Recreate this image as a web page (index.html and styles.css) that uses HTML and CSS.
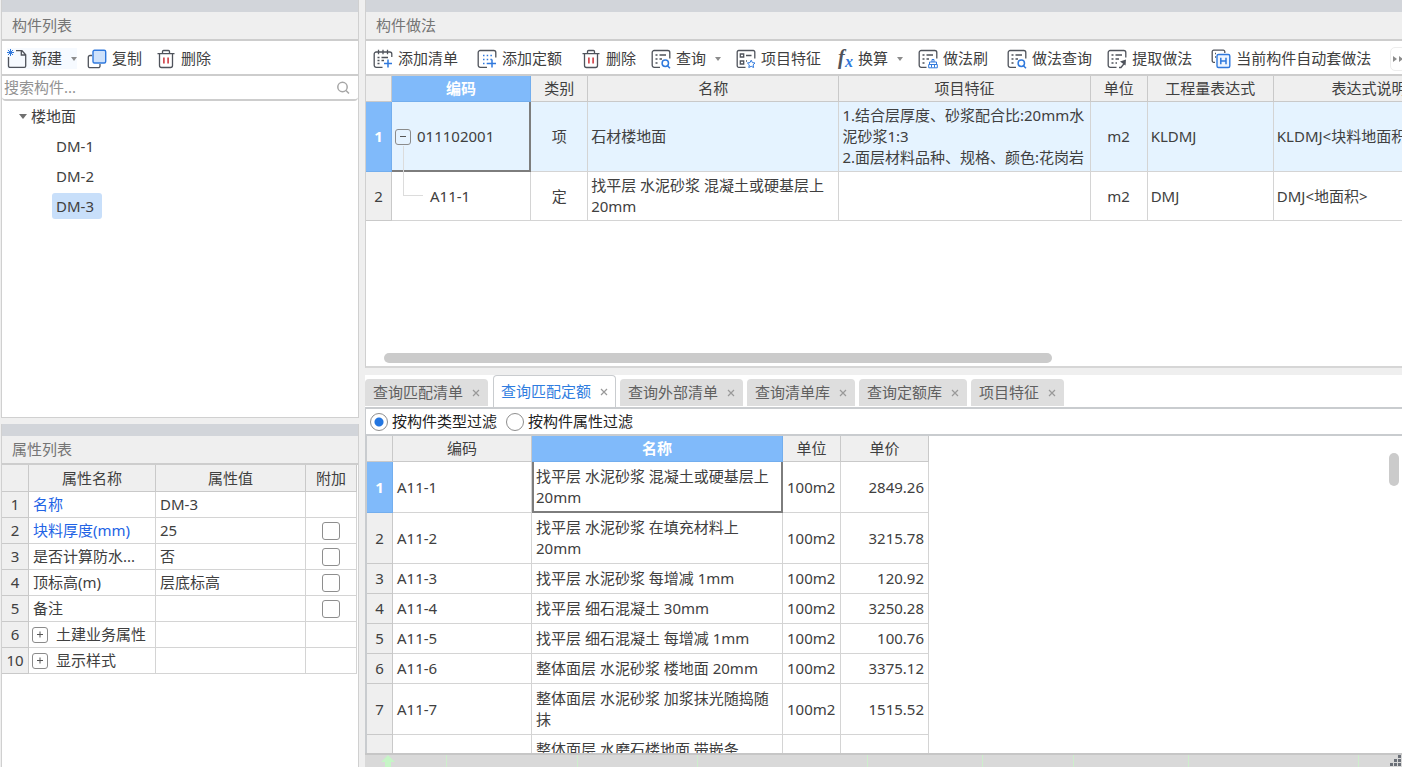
FILE: index.html
```html
<!DOCTYPE html>
<html lang="zh-CN">
<head>
<meta charset="utf-8">
<title>构件做法</title>
<link rel="stylesheet" href="styles.css">
</head>
<body>
<div class="app">
  <aside class="sidebar">
    <section class="panel components">
      <div class="grip"></div>
      <h2 class="panel-title">构件列表</h2>
      <div class="toolbar side-tools">
        <button class="tool split" type="button">
          <svg class="icon" viewBox="0 0 20 20"><path class="ink" d="M9 1.700h6l3.700 4V17a1.400 1.400 0 0 1-1.400 1.400H2.900A1.400 1.400 0 0 1 1.500 17V8M14.300 2v4h4"/><path class="blue thin" d="M0 3.500h7M3.500 0v7M1 1l5 5M6 1L1 6"/></svg>
          <span>新建</span><i class="caret"></i>
        </button>
        <button class="tool gap-after" type="button">
          <svg class="icon" viewBox="0 0 20 20"><path class="ink" d="M5 6.500H3A1.700 1.700 0 0 0 1.300 8.200V17A1.700 1.700 0 0 0 3 18.700h8.300A1.700 1.700 0 0 0 13 17v-2"/><rect x="6" y="1.300" width="12.700" height="12.700" rx="1.500" fill="#cfe2fb" stroke="#3079dd" stroke-width="1.400"/></svg>
          <span>复制</span>
        </button>
        <button class="tool" type="button">
          <svg class="icon" viewBox="0 0 20 20"><path class="ink" d="M1.500 4.600h17M6.500 4.300V2.600q0-1.100 1.100-1.100h4.800q1.100 0 1.100 1.100v1.700M3.500 4.800V16.500a2 2 0 0 0 2 2h9a2 2 0 0 0 2-2V4.800"/><path class="red" d="M7.900 8.500v6M12.100 8.500v6"/></svg>
          <span>删除</span>
        </button>
      </div>
      <label class="search">
        <input type="search" placeholder="搜索构件..." aria-label="搜索构件">
        <svg viewBox="0 0 14 14"><circle cx="6.500" cy="6" r="4.700"/><path d="M10 9.500l3 3"/></svg>
      </label>
      <div class="tree">
        <div class="tree-root"><i class="caret dark"></i>楼地面</div>
        <ul>
          <li><button type="button">DM-1</button></li>
          <li><button type="button">DM-2</button></li>
          <li><button type="button" class="on">DM-3</button></li>
        </ul>
      </div>
    </section>

    <section class="panel properties">
      <div class="grip"></div>
      <h2 class="panel-title">属性列表</h2>
      <table class="grid props">
        <colgroup><col class="p-no"><col class="p-name"><col><col class="p-add"></colgroup>
        <thead><tr><th></th><th>属性名称</th><th>属性值</th><th>附加</th></tr></thead>
        <tbody>
          <tr><th>1</th><td class="link">名称</td><td>DM-3</td><td></td></tr>
          <tr><th>2</th><td class="link">块料厚度(mm)</td><td>25</td><td class="mid"><input type="checkbox" aria-label="块料厚度附加"></td></tr>
          <tr><th>3</th><td>是否计算防水...</td><td>否</td><td class="mid"><input type="checkbox" aria-label="是否计算防水附加"></td></tr>
          <tr><th>4</th><td>顶标高(m)</td><td>层底标高</td><td class="mid"><input type="checkbox" aria-label="顶标高附加"></td></tr>
          <tr><th>5</th><td>备注</td><td></td><td class="mid"><input type="checkbox" aria-label="备注附加"></td></tr>
          <tr><th>6</th><td><div class="group"><button class="expander plus" type="button" aria-label="展开"></button>土建业务属性</div></td><td></td><td></td></tr>
          <tr><th>10</th><td><div class="group"><button class="expander plus" type="button" aria-label="展开"></button>显示样式</div></td><td></td><td></td></tr>
        </tbody>
      </table>
    </section>
  </aside>

  <main class="main">
    <section class="panel methods">
      <div class="grip"></div>
      <h2 class="panel-title">构件做法</h2>
      <div class="toolbar main-tools">
        <button class="tool gap-after" type="button">
          <svg class="icon" viewBox="0 0 20 20"><path class="ink" d="M9.500 18.300H3.200a2 2 0 0 1-2-2V5a2 2 0 0 1 2-2h13.600a2 2 0 0 1 2 2v3M5.500.800v4.400M10 .800v4.400M14.500.800v4.400M4.500 8.500h2M8.500 8.500h6.500M4.500 11.500h2M8.500 11.500h2.500M4.500 14.500h2"/><path class="blue" d="M15 10.500v8M11 14.500h8"/></svg>
          <span>添加清单</span>
        </button>
        <button class="tool gap-after" type="button">
          <svg class="icon" viewBox="0 0 20 20"><path class="ink" d="M10 18.300H3.200a2 2 0 0 1-2-2V3.500a2 2 0 0 1 2-2h13.600a2 2 0 0 1 2 2v5"/><path class="blue dots" d="M6 6.500h9M6 10.500h9M6 14.500h5"/><path class="blue" d="M15 10.500v8M11 14.500h8"/></svg>
          <span>添加定额</span>
        </button>
        <button class="tool" type="button">
          <svg class="icon" viewBox="0 0 20 20"><path class="ink" d="M1.500 4.600h17M6.500 4.300V2.600q0-1.100 1.100-1.100h4.800q1.100 0 1.100 1.100v1.700M3.500 4.800V16.500a2 2 0 0 0 2 2h9a2 2 0 0 0 2-2V4.800"/><path class="red" d="M7.900 8.500v6M12.100 8.500v6"/></svg>
          <span>删除</span>
        </button>
        <button class="tool" type="button">
          <svg class="icon" viewBox="0 0 20 20"><path class="ink" d="M9 18.300H3.200a2 2 0 0 1-2-2V3.500a2 2 0 0 1 2-2h13.600a2 2 0 0 1 2 2v6M4.500 6h2M8.500 6h6.500M4.500 10h2M8.500 10h2.500M4.500 14h2"/><circle class="blue" cx="14.300" cy="14.300" r="3.200"/><path class="blue" d="M16.500 16.700l2.500 2.500"/></svg>
          <span>查询</span><i class="caret"></i>
        </button>
        <button class="tool" type="button">
          <svg class="icon" viewBox="0 0 20 20"><path class="ink" d="M9.500 18.300H2.700a1.500 1.500 0 0 1-1.500-1.500V3a1.500 1.500 0 0 1 1.500-1.500h14.600a1.500 1.500 0 0 1 1.500 1.500v6.500M4.300 5h3.400v3H4.300zM10 6.500h5.500M4.300 12h3.400v3H4.300zM10 12h1"/><path class="blue thin" d="M15.200 11.200l1.200 2.400 2.600.400-1.900 1.900.500 2.600-2.400-1.200-2.400 1.200.500-2.600-1.900-1.900 2.600-.400z"/></svg>
          <span>项目特征</span>
        </button>
        <button class="tool" type="button">
          <svg class="icon fx" viewBox="0 0 17 20"><text class="fx-f" x="2" y="15">f</text><text class="fx-x" x="9" y="18">x</text></svg>
          <span>换算</span><i class="caret"></i>
        </button>
        <button class="tool gap-after" type="button">
          <svg class="icon" viewBox="0 0 20 20"><path class="ink" d="M8.500 18.300H3.200a2 2 0 0 1-2-2V3.500a2 2 0 0 1 2-2h13.600a2 2 0 0 1 2 2v6M4.500 6h2M8.500 6h6.500M4.500 10h2M8.500 10h2.500M4.500 14h2"/><path class="blue thin" d="M14 13v-2.500h2V13M11.500 15.500V13h7v2.500M10.700 15.500h8.600v3.300h-8.600zM13.500 16v2.500M16.500 16v2.500"/></svg>
          <span>做法刷</span>
        </button>
        <button class="tool" type="button">
          <svg class="icon" viewBox="0 0 20 20"><path class="ink" d="M9 18.300H3.200a2 2 0 0 1-2-2V3.500a2 2 0 0 1 2-2h13.600a2 2 0 0 1 2 2v6M4.500 6h2M8.500 6h6.500M4.500 10h2M8.500 10h2.500M4.500 14h2"/><circle class="blue" cx="14.300" cy="14.300" r="3.200"/><path class="blue" d="M16.500 16.700l2.500 2.500"/></svg>
          <span>做法查询</span>
        </button>
        <button class="tool gap-after" type="button">
          <svg class="icon" viewBox="0 0 20 20"><path class="ink" d="M9.500 18.300H3.200a2 2 0 0 1-2-2V3.500a2 2 0 0 1 2-2h13.600a2 2 0 0 1 2 2v5M4.500 6h2M8.500 6h6.500M4.500 10h2M8.500 10h3.500M4.500 14h2M8.500 14h1.500M12 18.500h2l4-5"/><path d="M13 12.500l6-2-.500 6z" fill="#4f535b"/></svg>
          <span>提取做法</span>
        </button>
        <button class="tool gap-after" type="button">
          <svg class="icon" viewBox="0 0 20 20"><path class="ink" d="M4 13.300H2.700a1.500 1.500 0 0 1-1.500-1.500V2.700a1.500 1.500 0 0 1 1.500-1.500h9.600a1.500 1.500 0 0 1 1.500 1.500V4M4 4.500h1M4 8h1"/><rect x="6" y="5.500" width="12.800" height="13" rx="1.500" fill="#eef5ff" stroke="#3079dd" stroke-width="1.400"/><path class="blue" d="M9.800 8.800v6.500M15 8.800v6.500M9.800 12H15"/></svg>
          <span>当前构件自动套做法</span>
        </button>
        <button class="more" type="button" aria-label="更多"><i></i><i></i></button>
      </div>
      <div class="table-scroll">
        <table class="grid bill">
          <colgroup><col class="c-no"><col class="c-code"><col class="c-type"><col class="c-text"><col class="c-text"><col class="c-unit"><col class="c-expr"><col class="c-desc"></colgroup>
          <thead><tr><th></th><th class="on">编码</th><th>类别</th><th>名称</th><th>项目特征</th><th>单位</th><th>工程量表达式</th><th>表达式说明</th></tr></thead>
          <tbody>
            <tr class="picked"><th class="on">1</th><td class="focus"><div class="group parent"><button class="expander minus" type="button" aria-label="折叠"></button>011102001</div></td><td class="mid">项</td><td>石材楼地面</td><td>1.结合层厚度、砂浆配合比:20mm水泥砂浆1:3<br>2.面层材料品种、规格、颜色:花岗岩</td><td class="mid">m2</td><td>KLDMJ</td><td>KLDMJ&lt;块料地面积&gt;</td></tr>
            <tr><th>2</th><td class="child"><i></i>A11-1</td><td class="mid">定</td><td>找平层 水泥砂浆 混凝土或硬基层上 20mm</td><td></td><td class="mid">m2</td><td>DMJ</td><td>DMJ&lt;地面积&gt;</td></tr>
          </tbody>
        </table>
      </div>
      <div class="h-scroll"><i></i></div>
    </section>

    <section class="query">
      <div class="tabs" role="tablist">
        <button class="tab" role="tab" type="button">查询匹配清单<svg viewBox="0 0 8 8"><path d="M1 1l6 6M7 1L1 7"/></svg></button>
        <button class="tab active" role="tab" type="button" aria-selected="true">查询匹配定额<svg viewBox="0 0 8 8"><path d="M1 1l6 6M7 1L1 7"/></svg></button>
        <button class="tab" role="tab" type="button">查询外部清单<svg viewBox="0 0 8 8"><path d="M1 1l6 6M7 1L1 7"/></svg></button>
        <button class="tab" role="tab" type="button">查询清单库<svg viewBox="0 0 8 8"><path d="M1 1l6 6M7 1L1 7"/></svg></button>
        <button class="tab" role="tab" type="button">查询定额库<svg viewBox="0 0 8 8"><path d="M1 1l6 6M7 1L1 7"/></svg></button>
        <button class="tab" role="tab" type="button">项目特征<svg viewBox="0 0 8 8"><path d="M1 1l6 6M7 1L1 7"/></svg></button>
      </div>
      <div class="filters">
        <label><input type="radio" name="filter" checked>按构件类型过滤</label>
        <label><input type="radio" name="filter">按构件属性过滤</label>
      </div>
      <div class="results">
        <table class="grid quota">
          <colgroup><col class="c-no"><col class="c-code"><col class="c-text"><col class="q-unit"><col class="q-price"></colgroup>
          <thead><tr><th></th><th>编码</th><th class="on">名称</th><th>单位</th><th>单价</th></tr></thead>
          <tbody>
            <tr><th class="on">1</th><td>A11-1</td><td class="focus">找平层 水泥砂浆 混凝土或硬基层上 20mm</td><td>100m2</td><td class="num">2849.26</td></tr>
            <tr><th>2</th><td>A11-2</td><td>找平层 水泥砂浆 在填充材料上<br>20mm</td><td>100m2</td><td class="num">3215.78</td></tr>
            <tr><th>3</th><td>A11-3</td><td>找平层 水泥砂浆 每增减 1mm</td><td>100m2</td><td class="num">120.92</td></tr>
            <tr><th>4</th><td>A11-4</td><td>找平层 细石混凝土 30mm</td><td>100m2</td><td class="num">3250.28</td></tr>
            <tr><th>5</th><td>A11-5</td><td>找平层 细石混凝土 每增减 1mm</td><td>100m2</td><td class="num">100.76</td></tr>
            <tr><th>6</th><td>A11-6</td><td>整体面层 水泥砂浆 楼地面 20mm</td><td>100m2</td><td class="num">3375.12</td></tr>
            <tr><th>7</th><td>A11-7</td><td>整体面层 水泥砂浆 加浆抹光随捣随抹</td><td>100m2</td><td class="num">1515.52</td></tr>
            <tr><th></th><td></td><td>整体面层 水磨石楼地面 带嵌条<br>&nbsp;</td><td></td><td></td></tr>
          </tbody>
        </table>
        <i class="v-thumb"></i>
      </div>
    </section>
    <footer class="canvas-strip">
      <svg class="ruler" viewBox="0 0 1000 12" preserveAspectRatio="xMinYMin slice"><path d="M23 0l7 7h-4v5h-6V7h-4z" fill="#c6f5c6"/><path d="M81.500 0v12M212.500 0v12M332.500 0v12M502.500 0v12M617.500 0v12M708.500 0v12M823.500 0v12M993.500 0v12" stroke="#cdeecb" stroke-width="1"/></svg>
      <svg class="resize" viewBox="0 0 12 12"><path d="M8 0h3v3H8zM4 4h3v3H4zM8 4h3v3H8zM0 8h3v3H0zM4 8h3v3H4zM8 8h3v3H8z" fill="#6b7078"/></svg>
    </footer>
  </main>
</div>
</body>
</html>
```

FILE: styles.css
```css
* { box-sizing: border-box; }

body {
  margin: 0;
  background: #efefef;
  color: #404040;
  font: 15px/21px "Noto Sans", "Noto Sans CJK SC", sans-serif;
}

button, input { font: inherit; color: inherit; }
button { background: none; border: 0; padding: 0; white-space: nowrap; }

.app {
  display: grid;
  grid-template-columns: 359px minmax(0, 1fr);
  gap: 6px;
  height: 100vh;
  overflow: hidden;
}

.sidebar {
  display: flex;
  flex-direction: column;
  gap: 6px;
  padding-left: 1px;
}

.main { display: flex; flex-direction: column; min-width: 0; min-height: 0; }

.panel {
  display: flex;
  flex-direction: column;
  background: #fff;
  border: solid #d0d0d0;
  border-width: 0 1px 1px;
}

.components { flex: 0 0 418px; }
.properties { flex: 1; border-bottom: 0; }
.methods { flex: 0 0 368px; border-right: 0; border-bottom: 2px solid #d6d6d6; }

.grip { flex: none; height: 12px; background: #d2d5da; }

.panel-title {
  flex: none;
  margin: 0;
  padding: 3px 10px;
  height: 29px;
  background: #efefef;
  border-bottom: 2px solid #cdcdcd;
  color: #757575;
  font-size: 15px;
  font-weight: 400;
}

/* Toolbars */
.toolbar {
  display: flex;
  flex: none;
  align-items: center;
  height: 35px;
  padding-top: 2px;
  border-bottom: 2px solid #cdcdcd;
  overflow: hidden;
}

.side-tools { gap: 10px; padding-left: 5px; }
.main-tools { gap: 15px; padding-left: 7px; }

.tool { display: flex; flex: none; align-items: center; gap: 5px; }
.gap-after { margin-right: 4px; }
.split { background: #f6faff; }

.icon { width: 20px; height: 20px; fill: none; }
.icon.fx { width: 17px; overflow: visible; }
.ink { fill: none; stroke: #4f535b; stroke-width: 1.3; }
.blue { fill: none; stroke: #3079dd; stroke-width: 1.5; }
.red { fill: none; stroke: #cc2f36; stroke-width: 1.5; }
.thin { stroke-width: 1; }
.dots { stroke-dasharray: 1.5 2.2; }
.fx-f, .fx-x { font: italic 700 20px "Liberation Serif", serif; }
.fx-f { fill: #4f535b; }
.fx-x { fill: #3079dd; font-size: 16px; }

.caret {
  margin-left: 4px;
  border: solid transparent;
  border-width: 4px 3px 0;
  border-top-color: #8c8c8c;
}

.caret.dark { margin: 0; border-width: 5px 4px 0; border-top-color: #707070; }

.more {
  display: flex;
  flex: none;
  gap: 2px;
  padding: 8px 2px;
  border: 1px solid #ededed;
  border-radius: 5px;
}

.more i {
  border: solid transparent;
  border-width: 3px 0 3px 4px;
  border-left-color: #8c8c8c;
}

/* Search and tree */
.search {
  display: flex;
  flex: none;
  align-items: center;
  height: 25px;
  padding: 0 8px 0 2px;
  border-bottom: 2px solid #cdcdcd;
  border-radius: 4px;
}

.search input {
  flex: 1;
  min-width: 0;
  padding: 0;
  border: 0;
  outline: 0;
  background: none;
  appearance: none;
}

.search input::placeholder { color: #929292; opacity: 1; }
.search svg { width: 14px; height: 14px; fill: none; stroke: #a6a6a6; stroke-width: 1.5; }

.tree { line-height: 30px; }
.tree-root { display: flex; align-items: center; gap: 4px; padding-left: 17px; }
.tree ul { margin: 0; padding: 0 0 0 50px; list-style: none; }
.tree li { display: flex; align-items: center; height: 30px; }
.tree button { min-width: 50px; padding: 2px 4px; line-height: 22px; border-radius: 3px; text-align: left; }
.tree .on { background: #c8dffa; }

/* Data grids */
.grid {
  border-collapse: separate;
  border-spacing: 0;
  table-layout: fixed;
}

.grid th, .grid td {
  padding: 0 4px;
  border: solid #d4d4d4;
  border-width: 0 1px 1px 0;
  font-weight: 400;
  text-align: left;
}

.grid th { background: #efefef; padding: 0; text-align: center; border-color: #c9c9c9; }
.grid td.mid { text-align: center; }
.grid td.num { text-align: right; }
.grid .link { color: #2263e5; }

.grid th.on {
  background: #80bafa;
  border-color: #73aeee;
  color: #fff;
  font-weight: 700;
}

.group { display: flex; align-items: center; gap: 8px; }

.expander {
  position: relative;
  flex: none;
  width: 16px;
  height: 16px;
  border: 1px solid #8b8b8b;
  border-radius: 3px;
}

.expander::before, .plus::after {
  content: "";
  position: absolute;
  left: 4px;
  top: 6px;
  width: 6px;
  height: 1px;
  background: #555;
}

.plus::after { transform: rotate(90deg); }

/* Property grid */
.props { width: 355px; }
.p-no { width: 27px; }
.p-name { width: 127px; }
.p-add { width: 51px; }
.props th, .props td { height: 26px; white-space: nowrap; }
.props .group { margin-left: -1px; }
.props thead th { height: 27px; }

.props input {
  display: block;
  width: 18px;
  height: 18px;
  margin: 0 auto;
  border: 1px solid #8e8e8e;
  border-radius: 3px;
  appearance: none;
}

/* Bill grid */
.table-scroll { flex: 1; min-height: 0; overflow: hidden; }
.bill { width: 1099px; }
.c-no { width: 26px; }
.c-code { width: 139px; }
.c-type { width: 57px; }
.c-text { width: 251px; }
.c-unit { width: 57px; }
.c-expr { width: 126px; }
.c-desc { width: 191px; }
.bill td { padding: 3px; }
.bill thead th { height: 26px; }
.picked td { background: #e5f3ff; }
.bill .focus { box-shadow: inset -1px -1px #7d7d7d; border-color: #7d7d7d; }

.parent { position: relative; gap: 6px; }

.parent::after {
  content: "";
  position: absolute;
  left: 8px;
  top: 20px;
  height: 34px;
  border-left: 1px solid #dcdcdc;
}

.bill .child { position: relative; padding-left: 38px; }

.child i {
  position: absolute;
  left: 11px;
  top: 0;
  width: 20px;
  height: 24px;
  border: solid #dcdcdc;
  border-width: 0 0 1px 1px;
}

.h-scroll { flex: none; height: 13px; padding: 0 350px 0 18px; }

.h-scroll i {
  display: block;
  height: 10px;
  border-radius: 5px;
  background: #cbcbcb;
}

/* Query area */
.query {
  display: flex;
  flex: 1;
  flex-direction: column;
  min-height: 0;
  margin-top: 7px;
  background: #fff;
}

.tabs {
  display: flex;
  flex: none;
  align-items: flex-end;
  gap: 4px;
  height: 34px;
  border-bottom: 2px solid #c9cccf;
}

.tab {
  display: flex;
  align-items: center;
  gap: 9px;
  height: 27px;
  margin-bottom: 1px;
  padding: 0 8px;
  border-radius: 4px 4px 0 0;
  background: #dedede;
  color: #606060;
}

.tab svg { width: 8px; height: 8px; stroke: #999; stroke-width: 1.2; }

.tab.active {
  height: 32px;
  margin: 0 0 0 1px;
  padding: 0 7px;
  background: #fff;
  border: 1px solid #c9cccf;
  border-bottom: 0;
  color: #2f7de0;
}

.filters {
  display: flex;
  flex: none;
  align-items: center;
  gap: 9px;
  height: 27px;
  padding-left: 4px;
  border: solid #c9cccf;
  border-width: 0 0 2px 1px;
  color: #222;
}

.filters label { display: flex; align-items: center; gap: 4px; }

.filters input {
  width: 18px;
  height: 18px;
  margin: 0;
  border: 1px solid #8e8e8e;
  border-radius: 50%;
  appearance: none;
}

.filters input:checked {
  background: radial-gradient(circle, #2476e0 0 4px, #fff 5px);
}

.results {
  position: relative;
  flex: 1;
  min-height: 0;
  overflow: hidden;
  border-left: 2px solid #c9cccf;
}

.quota { width: 562px; }
.q-unit { width: 58px; }
.q-price { width: 88px; }
.quota td { padding: 4px; }
.quota thead th { height: 26px; }
.quota .focus { box-shadow: inset 2px 0 #7d7d7d, inset -1px -1px #7d7d7d; border-color: #7d7d7d; }

.v-thumb {
  position: absolute;
  right: 3px;
  top: 17px;
  width: 10px;
  height: 33px;
  border-radius: 5px;
  background: #cbcbcb;
}

.canvas-strip {
  position: relative;
  flex: none;
  height: 14px;
  overflow: hidden;
  background: #d9d9d9;
  border-top: 2px solid #c6c6c6;
}

.ruler { display: block; width: 1000px; height: 12px; }
.resize { position: absolute; right: 0; bottom: 0; width: 12px; height: 12px; }
```
